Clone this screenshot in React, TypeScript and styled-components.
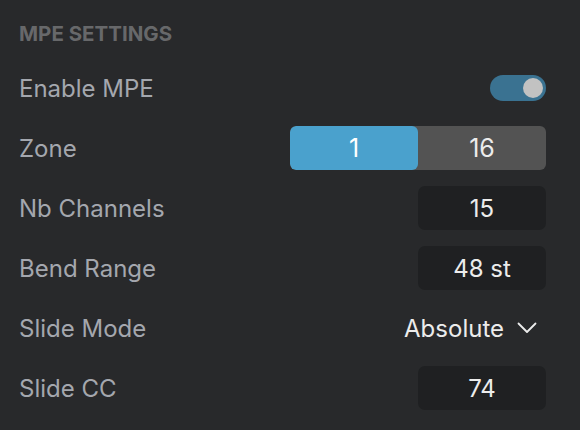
import React from "react";
import styled, { createGlobalStyle } from "styled-components";

const Global = createGlobalStyle`
  html, body { margin: 0; padding: 0; background: #28292b; }
  body { font-family: Inter, "Noto Sans", sans-serif; -webkit-font-smoothing: antialiased; }
`;

const Panel = styled.div`
  width: 580px;
  height: 430px;
  box-sizing: border-box;
  padding: 19px 34px 0 19px;
  background: #28292b;
  display: flex;
  flex-direction: column;
`;

const Header = styled.div`
  font-size: 20.5px;
  font-weight: 700;
  color: #67686a;
  line-height: 30px;
  height: 39px;
`;

const Row = styled.div`
  display: flex;
  align-items: center;
  justify-content: space-between;
  height: 60px;
`;

const Label = styled.span`
  font-size: 24px;
  color: #a4a7ae;
`;

const Toggle = styled.div<{ $on: boolean }>`
  width: 56px;
  height: 26px;
  border-radius: 13px;
  background: ${(p) => (p.$on ? "#3a7291" : "#4a4b4e")};
  display: flex;
  align-items: center;
  justify-content: ${(p) => (p.$on ? "flex-end" : "flex-start")};
  padding: 0 3px;
  box-sizing: border-box;
`;

const Knob = styled.div`
  width: 20px;
  height: 20px;
  border-radius: 50%;
  background: #c2c2c2;
`;

const Segmented = styled.div`
  display: flex;
  width: 256px;
  height: 44px;
  border-radius: 6px;
  background: #535353;
  overflow: hidden;
`;

const Segment = styled.div<{ $active: boolean }>`
  flex: 1;
  display: flex;
  align-items: center;
  justify-content: center;
  font-size: 25px;
  color: ${(p) => (p.$active ? "#ffffff" : "#ececec")};
  background: ${(p) => (p.$active ? "#4aa1cd" : "transparent")};
  border-radius: 6px;
`;

const ValueBox = styled.div`
  width: 128px;
  height: 44px;
  border-radius: 7px;
  background: #1f2022;
  display: flex;
  align-items: center;
  justify-content: center;
  font-size: 24px;
  color: #ececec;
`;

const Select = styled.div`
  display: flex;
  align-items: center;
  gap: 13px;
  font-size: 24px;
  color: #ececec;
  margin-right: 9px;
`;

const Chevron = () => (
  <svg width="20" height="12" viewBox="0 0 20 12" fill="none">
    <path d="M1.5 1.5 L10 10 L18.5 1.5" stroke="#ececec" strokeWidth="1.8" strokeLinecap="round" strokeLinejoin="round" />
  </svg>
);

export default function App() {
  return (
    <>
      <Global />
      <Panel>
        <Header>MPE SETTINGS</Header>
        <Row>
          <Label>Enable MPE</Label>
          <Toggle $on>
            <Knob />
          </Toggle>
        </Row>
        <Row>
          <Label>Zone</Label>
          <Segmented>
            <Segment $active>1</Segment>
            <Segment $active={false}>16</Segment>
          </Segmented>
        </Row>
        <Row>
          <Label>Nb Channels</Label>
          <ValueBox>15</ValueBox>
        </Row>
        <Row>
          <Label>Bend Range</Label>
          <ValueBox>48 st</ValueBox>
        </Row>
        <Row>
          <Label>Slide Mode</Label>
          <Select>
            Absolute
            <Chevron />
          </Select>
        </Row>
        <Row>
          <Label>Slide CC</Label>
          <ValueBox>74</ValueBox>
        </Row>
      </Panel>
    </>
  );
}
